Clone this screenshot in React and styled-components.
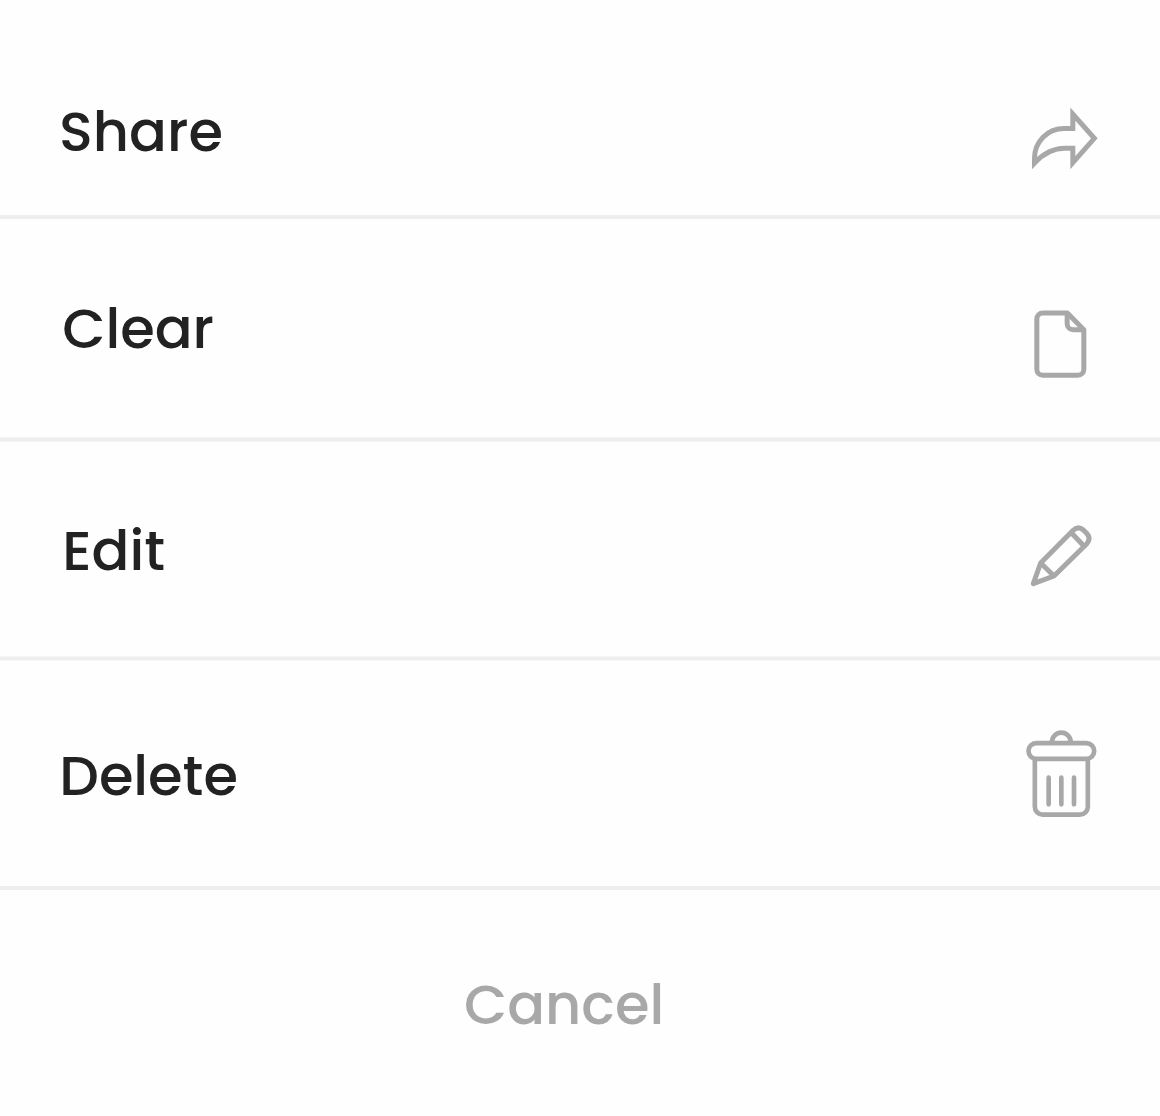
import React from "react";
import styled, { createGlobalStyle } from "styled-components";

const GlobalStyle = createGlobalStyle`
  * { box-sizing: border-box; }
  body { margin: 0; background: #fefefe; }
`;

const Sheet = styled.main`
  display: flex;
  flex-direction: column;
  width: 1160px;
  height: 1116px;
  overflow: hidden;
  background: #fefefe;
  font-family: Poppins, Inter, "Liberation Sans", sans-serif;
`;

const Row = styled.button`
  display: flex;
  flex: none;
  justify-content: space-between;
  align-items: flex-start;
  height: ${(p) => p.$height}px;
  padding: 0 ${(p) => p.$right}px 0 ${(p) => p.$left}px;
  border: 0;
  background: none;
  font: inherit;
`;

const Divider = styled.div`
  flex: none;
  height: ${(p) => (p.$soft ? 5 : 4)}px;
  background: ${(p) =>
    p.$soft
      ? "linear-gradient(#f5f5f5 1px, #eeeeee 1px, #eeeeee 4px, #f5f5f5 4px)"
      : "#eeeeee"};
`;

const Label = styled.span`
  margin-top: ${(p) => p.$top}px;
  color: ${(p) => (p.$muted ? "#a8a8a8" : "#222222")};
  font-size: 55.9px;
  font-weight: 500;
  line-height: 60px;
  font-feature-settings: "cv11";
  white-space: nowrap;
`;

const Icon = styled.svg`
  display: block;
  flex: none;
  margin-top: ${(p) => p.$top}px;
  fill: none;
  stroke: #a8a8a8;
  stroke-width: ${(p) => p.$weight || 15};
`;

const ShareIcon = ({ top }) => (
  <Icon $top={top} width="70" height="66" viewBox="60 48 210 198" strokeMiterlimit="10">
    <path d="M73.5 219V205C73.5 155 112 115.5 163 115.5H188.5V72L253 145L188.5 218V175H165C130 175 100 191 73.5 219Z" />
  </Icon>
);

const PageIcon = ({ top }) => (
  <Icon $top={top} width="60" height="72" viewBox="60 54 180 216" strokeLinejoin="round">
    <path d="M172 69H98.5a18 18 0 0 0-18 18V237.500a18 18 0 0 0 18 18H203.500a18 18 0 0 0 18-18V119Z" />
    <path d="M171.500 69V101a18 18 0 0 0 18 18H221" />
  </Icon>
);

const PencilIcon = ({ top }) => (
  <Icon $top={top} width="66" height="66" viewBox="57 39 198 198" strokeLinejoin="round">
    <path d="M70 221L92 159L188 62Q204 46 220 60L230 70Q245 86 229 103L132 198Z" />
    <path d="M92 159L132 198M184 68L221 107" />
  </Icon>
);

const TrashIcon = ({ top }) => (
  <Icon $top={top} $weight={14} width="74" height="92" viewBox="42 39 222 276" strokeLinecap="round">
    <rect x="55.5" y="84.5" width="197" height="47" rx="23.5" />
    <path d="M126 81a28 28 0 0 1 56 0" strokeLinecap="butt" />
    <path d="M74.5 132V275a24 24 0 0 0 24 24H209.500a24 24 0 0 0 24-24V132" strokeLinecap="butt" />
    <path d="M116 188V268M154 188V268M192 188V268" />
  </Icon>
);

const Footer = styled.footer`
  display: flex;
  flex: 1;
  align-items: flex-start;
  padding-left: 464px;
`;

const actions = [
  { name: "Share", height: 215, left: 59, right: 60, top: 102, Glyph: ShareIcon, iconTop: 106 },
  { name: "Clear", height: 218, left: 62.25, right: 70, top: 80, Glyph: PageIcon, iconTop: 89, soft: true },
  { name: "Edit", height: 214, left: 62.25, right: 65, top: 79, Glyph: PencilIcon, iconTop: 81, soft: true },
  { name: "Delete", height: 225, left: 59.25, right: 62, top: 85, Glyph: TrashIcon, iconTop: 67 },
];

export default function App() {
  return (
    <>
      <GlobalStyle />
      <Sheet>
        {actions.map(({ name, height, left, right, top, Glyph, iconTop, soft }) => (
          <React.Fragment key={name}>
            <Row $height={height} $left={left} $right={right}>
              <Label $top={top}>{name}</Label>
              <Glyph top={iconTop} />
            </Row>
            <Divider $soft={soft} />
          </React.Fragment>
        ))}
        <Footer>
          <Label $top={85} $muted>Cancel</Label>
        </Footer>
      </Sheet>
    </>
  );
}
